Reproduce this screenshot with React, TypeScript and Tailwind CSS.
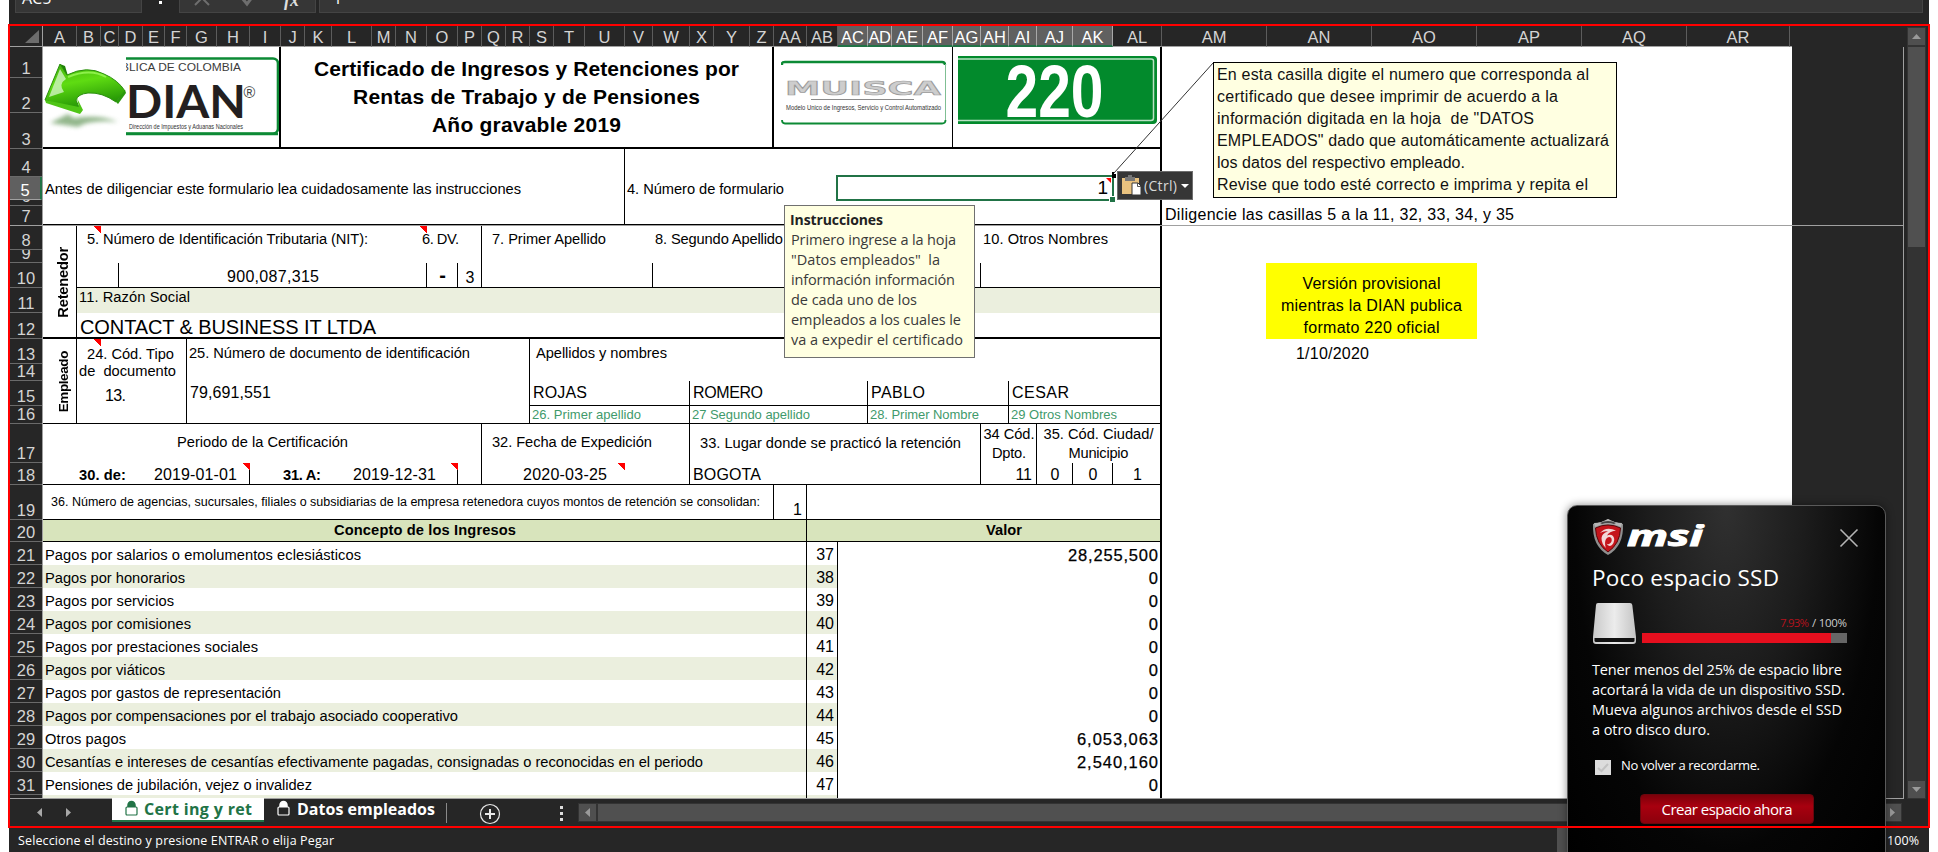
import { ReactNode, useLayoutEffect, useRef } from "react";

const COLUMNS: [string, number][] = [
  ["A", 34], ["B", 24], ["C", 18], ["D", 24], ["E", 22], ["F", 22], ["G", 30], ["H", 33], ["I", 31],
  ["J", 24], ["K", 27], ["L", 40], ["M", 24], ["N", 31], ["O", 31], ["P", 24], ["Q", 24], ["R", 24],
  ["S", 24], ["T", 31], ["U", 40], ["V", 28], ["W", 37], ["X", 24], ["Y", 36], ["Z", 24], ["AA", 33],
  ["AB", 31], ["AC", 30], ["AD", 24], ["AE", 31], ["AF", 30], ["AG", 28], ["AH", 28], ["AI", 28],
  ["AJ", 36], ["AK", 40], ["AL", 49], ["AM", 105], ["AN", 105], ["AO", 105], ["AP", 105], ["AQ", 105],
  ["AR", 103],
];
const TOP_ROWS = [31, 35, 36, 28, 23, 6, 19];
const BODY_ROWS = [24, 13, 25, 25, 26, 25, 17, 25, 18, 39, 22, 35, 22, 23, 23, 23, 23, 23, 23, 23, 23, 23, 23, 23, 3];
const BODY_START = 8;

const px = (sizes: number[]) => sizes.map((s) => s + "px").join(" ");
const COLUMN_TEMPLATE = px(COLUMNS.map((c) => c[1]));
const columnIndex = (name: string) => COLUMNS.findIndex((c) => c[0] === name) + 1;

function gridArea(range: string, firstRow: number) {
  const [from, to = from] = range.split(":");
  const a = /([A-Z]+)(\d+)/.exec(from)!;
  const b = /([A-Z]+)(\d+)/.exec(to)!;
  return `${+a[2] - firstRow + 1} / ${columnIndex(a[1])} / ${+b[2] - firstRow + 2} / ${columnIndex(b[1]) + 1}`;
}

/** Text set to a given width by adjusting the space between its letters. */
function T({ w, className = "", children }: { w?: number; className?: string; children: string }) {
  const ref = useRef<HTMLSpanElement>(null);
  useLayoutEffect(() => {
    const el = ref.current;
    if (!el || !w) return;
    const gaps = Math.max(1, children.length - 1);
    let space = 0;
    for (let pass = 0; pass < 3; pass++) {
      el.style.letterSpacing = space.toFixed(4) + "px";
      const drawn = el.getBoundingClientRect().width - space;
      space += (w + 1 - drawn) / gaps;
    }
    el.style.letterSpacing = space.toFixed(4) + "px";
    el.style.marginRight = (-space).toFixed(4) + "px";
  }, [w, children]);
  return (
    <span ref={ref} className={"inline-block shrink-0 whitespace-pre [font-variant-ligatures:none] " + className}>
      {children}
    </span>
  );
}

function Cell({ at, className = "", children }: { at: string; className?: string; children?: ReactNode }) {
  const row = +/\d+/.exec(at)![0];
  return (
    <div
      className={"flex min-h-0 min-w-0 items-end leading-none " + className}
      style={{ gridArea: gridArea(at, row < BODY_START ? 1 : BODY_START) }}
    >
      {children}
    </div>
  );
}

function Flag({ at }: { at: string }) {
  return (
    <Cell at={at} className="items-start! justify-end">
      <svg className="h-[8px] w-[8px] shrink-0" viewBox="0 0 8 8" shapeRendering="crispEdges">
        <path d="M0 0H8V8Z" fill="#f00" />
      </svg>
    </Cell>
  );
}

function Pane({ rows, children }: { rows: number[]; children: ReactNode }) {
  return (
    <div
      className="grid w-[1749px] shrink-0 bg-white text-[14.67px] text-black"
      style={{ gridTemplateColumns: COLUMN_TEMPLATE, gridTemplateRows: px(rows) }}
    >
      {children}
    </div>
  );
}

function RowHeads({ rows, first }: { rows: number[]; first: number }) {
  return (
    <div className="flex w-[34px] shrink-0 flex-col border-r border-[#a0a0a0] pl-px">
      {rows.map((h, i) => {
        const n = first + i;
        const active = n === 5;
        return (
          <div
            key={n}
            style={{ height: h }}
            className={
              "flex shrink-0 items-end justify-center overflow-hidden pb-px text-[16.5px] leading-none " +
              (active
                ? "border-b border-r-2 border-b-[#a0a0a0] border-r-[#217346] bg-[#606060] text-white"
                : "text-[#d4d4d4] " + (n === 7 || n === 32 ? "" : "border-b border-[#6a6a6a]"))
            }
          >
            {n === 32 ? "" : n}
          </div>
        );
      })}
    </div>
  );
}

const CONCEPTS: [string, number, string, number][] = [
  ["Pagos por salarios o emolumentos eclesiásticos", 315, "28,255,500", 89],
  ["Pagos por honorarios", 139, "0", 0],
  ["Pagos por servicios", 128, "0", 0],
  ["Pagos por comisiones", 145, "0", 0],
  ["Pagos por prestaciones sociales", 212, "0", 0],
  ["Pagos por viáticos", 119, "0", 0],
  ["Pagos por gastos de representación", 235, "0", 0],
  ["Pagos por compensaciones por el trabajo asociado cooperativo", 412, "0", 0],
  ["Otros pagos", 80, "6,053,063", 80],
  ["Cesantías e intereses de cesantías efectivamente pagadas, consignadas o reconocidas en el periodo", 657, "2,540,160", 80],
  ["Pensiones de jubilación, vejez o invalidez", 266, "0", 0],
];

function DianLogo() {
  return (
    <svg className="h-[98px] w-[236px]" viewBox="43 47 236 98">
      <defs>
        <linearGradient id="leaf" x1="0" y1="0" x2="0.3" y2="1">
          <stop offset="0" stopColor="#3fae0c" />
          <stop offset="0.45" stopColor="#5fdc12" />
          <stop offset="1" stopColor="#1f8f04" />
        </linearGradient>
        <filter id="soft" x="-30%" y="-80%" width="160%" height="260%">
          <feGaussianBlur stdDeviation="2.2" />
        </filter>
        <clipPath id="brand"><rect x="126" y="47" width="160" height="98" /></clipPath>
      </defs>
      <path d="M50 123 L68 114 L74 118 Q100 114 118 122 Q98 120 84 124 L78 127Z" fill="#6f9f66" opacity=".75" filter="url(#soft)" />
      <path d="M60 64 L65 66 L68 76 L63 77Z" fill="#1e8205" />
      <path d="M45 100 L60 64 L67 75 Q87 65 104 74 Q118 80 125 91 L116 102 Q102 92 88 93 Q78 94 76 100 L81 112Z" fill="url(#leaf)" stroke="#2c8f10" strokeWidth="1" />
      <path d="M49 97 L60 69 L66 79 Q58 84 64 92Z" fill="#d9f6cf" opacity=".75" />
      <path d="M68 77 Q90 68 106 77" stroke="#8df04a" strokeWidth="2" fill="none" />
      <path d="M45 100 L46 103 L80 114 L83 110 L77 98 L79 107Z" fill="#4fc516" />
      <path d="M116 102 L118 104 L126 93 L125 90Z" fill="#2a9a0c" />
      <g clipPath="url(#brand)">
        <rect x="100" y="58.5" width="178" height="75" rx="5" fill="none" stroke="#0c8a35" strokeWidth="2.6" />
        <path d="M126 134H278" stroke="#0c8a35" strokeWidth="2.4" />
        <text x="121" y="71" textLength="120" lengthAdjust="spacingAndGlyphs" fontSize="10.5" fill="#3c3c3c" fontFamily="Liberation Sans, sans-serif">BLICA DE COLOMBIA</text>
        <text x="126" y="118" textLength="120" lengthAdjust="spacingAndGlyphs" fontSize="45" fontWeight="700" fill="#231f20" fontFamily="Lato, sans-serif">DIAN</text>
        <text x="243.500" y="98" fontSize="16" fill="#444" fontFamily="Liberation Sans, sans-serif">®</text>
        <text x="129" y="129" textLength="114" lengthAdjust="spacingAndGlyphs" fontSize="7" fill="#333" fontFamily="Liberation Sans, sans-serif">Dirección de Impuestos y Aduanas Nacionales</text>
      </g>
    </svg>
  );
}

function MuiscaLogo() {
  return (
    <svg className="h-[66px] w-[166px]" viewBox="0 0 166 66">
      <path d="M1 5 V3.500 Q1 2 4 2 H161 Q164 2 164 5" fill="none" stroke="#0c8a35" strokeWidth="2.4" />
      <path d="M164.500 4V62" stroke="#7fbf93" strokeWidth="1" />
      <path d="M1 60 Q1 63.500 4 63.500 H161 Q164.500 63.500 164.500 60" fill="none" stroke="#0c8a35" strokeWidth="1.800" />
      <text x="4" y="34.500" textLength="156" lengthAdjust="spacingAndGlyphs" fontSize="20" fontWeight="700" fill="#cdcdcd" stroke="#9c9c9c" strokeWidth=".7" fontFamily="DejaVu Sans, sans-serif">MUISCA</text>
      <path d="M30 39.500H133" stroke="#8a8a8a" strokeWidth="1" />
      <text x="5" y="50" textLength="155" lengthAdjust="spacingAndGlyphs" fontSize="7.500" fill="#333" fontFamily="Liberation Sans, sans-serif">Modelo Unico de Ingresos, Servicio y Control Automatizado</text>
    </svg>
  );
}

function Badge220() {
  return (
    <svg className="h-[68px] w-[199px]" viewBox="0 0 199 68">
      <path d="M0 0H195Q199 0 199 4V64Q199 68 195 68H0Z" fill="#028a2c" />
      <path d="M0 3H193Q195.500 3 195.500 5V62Q195.500 64.500 193 64.500H0" fill="none" stroke="#b9e2c3" strokeWidth="1.500" />
      <text x="47.500" y="60.500" textLength="98" lengthAdjust="spacingAndGlyphs" fontSize="74" fontWeight="700" fill="#fff" fontFamily="Liberation Sans Narrow, Liberation Sans, sans-serif">220</text>
    </svg>
  );
}

function FormulaBar() {
  return (
    <div className="flex h-[26px] shrink-0 items-start gap-[3px] pl-[6px]">
      <div className="flex h-[13px] w-[127px] items-end overflow-hidden border border-t-0 border-[#444] bg-[#363636] pb-[6px] pl-[6px] text-[16px] leading-none text-white [font-family:'Open_Sans',sans-serif]">
        AC5
      </div>
      <div className="flex h-[5px] w-[31px] items-start justify-center pt-px">
        <i className="h-[3px] w-[3px] bg-white" />
      </div>
      <div className="flex h-[13px] w-[137px] justify-between overflow-hidden border border-t-0 border-[#444] bg-[#363636] pl-[14px] pr-[16px]">
        <svg className="h-[12px] w-[17px]" viewBox="0 0 17 12"><path d="M1 5L8 -2L15 5" stroke="#6e6e6e" strokeWidth="2" fill="none" /></svg>
        <svg className="h-[12px] w-[14px]" viewBox="0 0 14 12"><path d="M1 -2L6 4L12 -4" stroke="#6e6e6e" strokeWidth="3" fill="none" /></svg>
        <div className="flex h-[12px] items-end pb-[3px] text-[18px] font-bold italic leading-none text-[#ddd] [font-family:'Liberation_Serif',serif]">fx</div>
      </div>
      <div className="flex h-[13px] w-[1604px] items-end overflow-hidden border border-t-0 border-[#444] bg-[#363636] pb-[6px] pl-[13px] text-[16px] leading-none text-white [font-family:'Open_Sans',sans-serif]">
        1
      </div>
    </div>
  );
}

function ColumnHeads() {
  return (
    <div className="flex h-[21px] shrink-0">
      <div className="flex w-[34px] shrink-0 items-end justify-end border-b border-r border-[#a0a0a0] pb-[3px] pr-[3px]">
        <svg className="h-[13px] w-[14px]" viewBox="0 0 14 13"><path d="M14 0V13H0Z" fill="#6d6d6d" /></svg>
      </div>
      {COLUMNS.map(([name, w], i) => {
        const active = i >= 28 && i <= 36;
        return (
          <div
            key={name}
            style={{ width: w }}
            className={
              "flex shrink-0 items-end justify-center whitespace-nowrap border-r text-[16.5px] leading-none " +
              (active
                ? "border-b-2 border-b-[#217346] border-r-[#a8a8a8] bg-[#606060] pb-0 text-white"
                : "border-b border-b-[#a0a0a0] border-r-[#5c5c5c] pb-px text-[#d4d4d4]")
            }
          >
            <span className={name === "AD" ? "tracking-[-0.4px]" : ""}>{name}</span>
          </div>
        );
      })}
      <div className="w-[2px] border-b border-[#a0a0a0]" />
    </div>
  );
}

function TopPane() {
  return (
    <div className="flex shrink-0 border-b border-[#a0a0a0]">
      <RowHeads rows={TOP_ROWS} first={1} />
      <Pane rows={TOP_ROWS}>
        <Cell at="A1:I3" className="items-start! border-r-2 border-black"><DianLogo /></Cell>
        <Cell at="J1:Z3" className="flex-col items-center! justify-start border-r-2 border-black pt-[8px] text-[21px] font-bold leading-[28px]!">
          <T w={424}>Certificado de Ingresos y Retenciones por</T>
          <T w={346}>Rentas de Trabajo y de Pensiones</T>
          <T w={188}>Año gravable 2019</T>
        </Cell>
        <Cell at="AA1:AF3" className="items-start! border-r border-black pl-[7px] pt-[13px]"><MuiscaLogo /></Cell>
        <Cell at="AG1:AL3" className="items-start! pl-[5px] pt-[9px]"><Badge220 /></Cell>
        <Cell at="A1:AL3" className="border-b-2 border-black" />
        <Cell at="A1:AL7" className="border-r-2 border-b border-black" />
        <Cell at="A4:U7" className="border-r border-black" />
        <Cell at="A5:U5" className="pb-[3px] pl-[2px]"><T w={475}>Antes de diligenciar este formulario lea cuidadosamente las instrucciones</T></Cell>
        <Cell at="V5:AB5" className="pb-[3px] pl-[2px]"><T w={156}>4. Número de formulario</T></Cell>
        <Cell at="AC5:AK5" className="justify-end pb-[3px] pr-[5px] text-[19px]"><T>1</T></Cell>
        <Cell at="AM7:AR7" className="pb-[2px] pl-[3px] text-[16px]"><T w={348}>Diligencie las casillas 5 a la 11, 32, 33, 34, y 35</T></Cell>
      </Pane>
    </div>
  );
}

function BodyPane() {
  return (
    <div className="flex shrink-0 border-b border-[#a0a0a0]">
      <RowHeads rows={BODY_ROWS} first={BODY_START} />
      <Pane rows={BODY_ROWS}>
        <Cell at="B11:AL11" className="bg-[#ebefde]" />
        <Cell at="A20:AL20" className="bg-[#d8e4bc]" />
        {[22, 24, 26, 28, 30, 32].map((r) => (
          <Cell key={r} at={`A${r}:AB${r}`} className="bg-[#ebefde]" />
        ))}

        <Cell at="A8:AL32" className="border-r-2 border-black" />
        <Cell at="A8:AL12" className="border-b-2 border-black" />
        <Cell at="A8:A16" className="border-r border-black" />
        <Cell at="B8:P10" className="border-r border-black" />
        <Cell at="B10:AL10" className="border-b border-black" />
        <Cell at="B10:C10" className="border-r border-black" />
        <Cell at="D10:N10" className="border-r border-black" />
        <Cell at="O10" className="border-r border-black" />
        <Cell at="Q10:V10" className="border-r border-black" />
        <Cell at="W10:AG10" className="border-r border-black" />
        <Cell at="A13:AL16" className="border-b border-black" />
        <Cell at="B13:F16" className="border-r border-black" />
        <Cell at="G13:R16" className="border-r border-black" />
        <Cell at="S15:AL15" className="border-b border-black" />
        <Cell at="S15:W16" className="border-r border-black" />
        <Cell at="X15:AC16" className="border-r border-black" />
        <Cell at="AD15:AH16" className="border-r border-black" />
        <Cell at="A17:AL18" className="border-b border-black" />
        <Cell at="A17:P18" className="border-r border-black" />
        <Cell at="Q17:W18" className="border-r border-black" />
        <Cell at="X17:AG18" className="border-r border-black" />
        <Cell at="AH17:AI18" className="border-r border-black" />
        <Cell at="A18:H18" className="border-r border-black" />
        <Cell at="I18:O18" className="border-r border-black" />
        <Cell at="AJ18" className="border-r border-black" />
        <Cell at="AK18" className="border-r border-black" />
        <Cell at="A19:AL19" className="border-b border-black" />
        <Cell at="A19:Z19" className="border-r border-black" />
        <Cell at="A20:AL20" className="border-b border-black" />
        <Cell at="A19:AA32" className="border-r border-black" />
        <Cell at="AB21:AB32" className="border-r border-black" />

        <Flag at="B8" />
        <Flag at="N8" />
        <Flag at="B13" />
        <Flag at="H18" />
        <Flag at="O18" />
        <Flag at="U18" />

        <Cell at="A8:A12" className="items-center! justify-center pl-[7px]">
          <span className="rotate-180 text-[14.67px] font-bold tracking-[-0.2px] [writing-mode:vertical-rl]">Retenedor</span>
        </Cell>
        <Cell at="A13:A16" className="items-center! justify-center pl-[7px]">
          <span className="rotate-180 text-[13.5px] font-bold tracking-[-0.4px] [writing-mode:vertical-rl]">Empleado</span>
        </Cell>

        <Cell at="B8:L8" className="pb-[3px] pl-[10px]"><T w={280}>5. Número de Identificación Tributaria (NIT):</T></Cell>
        <Cell at="M8:P8" className="pb-[3px] pl-[50px]"><T w={36}>6. DV.</T></Cell>
        <Cell at="Q8:V8" className="pb-[3px] pl-[10px]"><T w={113}>7. Primer Apellido</T></Cell>
        <Cell at="W8:Z8" className="pb-[3px] pl-[2px]"><T w={127}>8. Segundo Apellido</T></Cell>
        <Cell at="AH8:AL8" className="pb-[3px] pl-[2px]"><T w={124}>10. Otros Nombres</T></Cell>

        <Cell at="D10:N10" className="justify-center pb-[3px] text-[16px]"><T w={91}>900,087,315</T></Cell>
        <Cell at="O10" className="justify-center pb-[3px] text-[20px] font-bold"><T>-</T></Cell>
        <Cell at="P10" className="justify-center pb-[2px] text-[16px]"><T>3</T></Cell>
        <Cell at="B11:AL11" className="pb-[8px] pl-[2px]"><T w={110}>11. Razón Social</T></Cell>
        <Cell at="B12:AL12" className="pb-[2px] pl-[3px] text-[20px]"><T w={295}>CONTACT & BUSINESS IT LTDA</T></Cell>

        <Cell at="B13:F14" className="flex-col items-start! justify-end pb-px pl-[2px] leading-[17px]!">
          <T w={86} className="ml-[8px]">24. Cód. Tipo</T>
          <T w={96}>de  documento</T>
        </Cell>
        <Cell at="B15:F15" className="pb-[2px] pl-[28px] text-[16px]"><T w={20}>13.</T></Cell>
        <Cell at="G13:R13" className="pb-[3px] pl-[2px]"><T w={280}>25. Número de documento de identificación</T></Cell>
        <Cell at="G15:R15" className="pb-[5px] pl-[3px] text-[16px]"><T w={80}>79,691,551</T></Cell>
        <Cell at="S13:AL13" className="pb-[3px] pl-[6px]"><T w={130}>Apellidos y nombres</T></Cell>
        <Cell at="S15:W15" className="pb-[5px] pl-[3px] text-[16px]"><T w={53}>ROJAS</T></Cell>
        <Cell at="X15:AC15" className="pb-[5px] pl-[3px] text-[16px]"><T w={69}>ROMERO</T></Cell>
        <Cell at="AD15:AH15" className="pb-[5px] pl-[3px] text-[16px]"><T w={53}>PABLO</T></Cell>
        <Cell at="AI15:AL15" className="pb-[5px] pl-[3px] text-[16px]"><T w={56}>CESAR</T></Cell>
        <Cell at="S16:W16" className="pb-[3px] pl-[2px] text-[13px] text-[#3f9a6b]"><T w={108}>26. Primer apellido</T></Cell>
        <Cell at="X16:AC16" className="pb-[3px] pl-[2px] text-[13px] text-[#3f9a6b]"><T w={117}>27 Segundo apellido</T></Cell>
        <Cell at="AD16:AH16" className="pb-[3px] pl-[2px] text-[13px] text-[#3f9a6b]"><T w={108}>28. Primer Nombre</T></Cell>
        <Cell at="AI16:AL16" className="pb-[3px] pl-[2px] text-[13px] text-[#3f9a6b]"><T w={105}>29 Otros Nombres</T></Cell>

        <Cell at="A17:P17" className="justify-center pb-[13px]"><T w={170}>Periodo de la Certificación</T></Cell>
        <Cell at="Q17:W17" className="pb-[13px] pl-[10px]"><T w={159}>32. Fecha de Expedición</T></Cell>
        <Cell at="X17:AG17" className="pb-[12px] pl-[10px]"><T w={260}>33. Lugar donde se practicó la retención</T></Cell>
        <Cell at="AH17:AI17" className="flex-col items-center! justify-end pb-0 leading-[19px]!">
          <T w={50}>34 Cód.</T>
          <T w={33}>Dpto.</T>
        </Cell>
        <Cell at="AJ17:AL17" className="flex-col items-center! justify-end pb-0 pr-[2px] leading-[19px]!">
          <T w={109}>35. Cód. Ciudad/</T>
          <T w={59}>Municipio</T>
        </Cell>

        <Cell at="B18:E18" className="pb-[2px] pl-[2px] font-bold"><T w={46}>30. de:</T></Cell>
        <Cell at="E18:H18" className="pb-[2px] pl-[11px] text-[16px]"><T w={82}>2019-01-01</T></Cell>
        <Cell at="I18:K18" className="pb-[2px] pl-[33px] font-bold"><T w={37}>31. A:</T></Cell>
        <Cell at="L18:O18" className="pb-[2px] pl-[21px] text-[16px]"><T w={82}>2019-12-31</T></Cell>
        <Cell at="R18:U18" className="pb-[2px] pl-[17px] text-[16px]"><T w={83}>2020-03-25</T></Cell>
        <Cell at="X18:AG18" className="pb-[2px] pl-[3px] text-[16px]"><T w={67}>BOGOTA</T></Cell>
        <Cell at="AH18:AI18" className="justify-end pb-[2px] pr-[5px] text-[16px]"><T>11</T></Cell>
        <Cell at="AJ18" className="justify-center pb-[2px] text-[16px]"><T>0</T></Cell>
        <Cell at="AK18" className="justify-center pb-[2px] text-[16px]"><T>0</T></Cell>
        <Cell at="AL18" className="justify-center pb-[2px] text-[16px]"><T>1</T></Cell>

        <Cell at="A19:Z19" className="pb-[12px] pl-[8px] text-[12.500px]"><T w={708}>36. Número de agencias, sucursales, filiales o subsidiarias de la empresa retenedora cuyos montos de retención se consolidan:</T></Cell>
        <Cell at="AA19" className="justify-end pb-[2px] pr-[5px] text-[16px]"><T>1</T></Cell>
        <Cell at="A20:AA20" className="justify-center pb-[4px] font-bold"><T w={181}>Concepto de los Ingresos</T></Cell>
        <Cell at="AB20:AL20" className="justify-center pb-[4px] pl-[39px] font-bold"><T w={35}>Valor</T></Cell>

        {CONCEPTS.map(([label, w], i) => (
          <Cell key={label} at={`A${21 + i}:AA${21 + i}`} className="pb-[2px] pl-[2px]"><T w={w}>{label}</T></Cell>
        ))}
        {CONCEPTS.map(([label], i) => (
          <Cell key={label} at={`AB${21 + i}`} className="justify-end pb-[2px] pr-[4px] text-[16px]"><T>{String(37 + i)}</T></Cell>
        ))}
        {CONCEPTS.map(([label, , value, vw], i) => (
          <Cell key={label} at={`AC${21 + i}:AL${21 + i}`} className="justify-end pb-[2px] pr-[4px] text-[16.5px] [-webkit-text-stroke:0.25px_black]"><T w={vw}>{value}</T></Cell>
        ))}

        <Cell at="AN10:AO12" className="-ml-px flex-col items-center! justify-start bg-[#ff0] pt-[10px] text-[16px] leading-[22px]!">
          <T w={137}>Versión provisional</T>
          <T w={180}>mientras la DIAN publica</T>
          <T w={135}>formato 220 oficial</T>
        </Cell>
        <Cell at="AN13" className="justify-end pb-[2px] pr-[3px] text-[16px]"><T w={72}>1/10/2020</T></Cell>
      </Pane>
    </div>
  );
}

function VerticalScroll() {
  return (
    <div className="flex w-[25px] shrink-0 justify-start pl-[3px] pt-px">
      <div className="flex h-[772px] w-[19px] flex-col items-center bg-[#333] py-px">
        <div className="flex h-[17px] w-[17px] items-center justify-center bg-[#4f4f4f]">
          <svg className="h-[5px] w-[9px]" viewBox="0 0 9 5"><path d="M0 5L4.500 0L9 5Z" fill="#9a9a9a" /></svg>
        </div>
        <div className="mt-[2px] h-[200px] w-[17px] bg-[#505050]" />
        <div className="mt-auto flex h-[17px] w-[17px] items-center justify-center bg-[#4f4f4f]">
          <svg className="h-[5px] w-[9px]" viewBox="0 0 9 5"><path d="M0 0L4.500 5L9 0Z" fill="#9a9a9a" /></svg>
        </div>
      </div>
    </div>
  );
}

function Lock({ body, ring }: { body: string; ring: string }) {
  return (
    <svg className="h-[16px] w-[13px]" viewBox="0 0 13 16">
      <path d="M3 7V5a3.500 3.500 0 0 1 7 0V7" fill={ring} stroke={ring} strokeWidth="1.500" />
      <rect x="1" y="7" width="11" height="8" rx="1" fill={body} stroke={ring} strokeWidth="1.200" />
    </svg>
  );
}

function SheetTabs() {
  return (
    <div className="flex h-[29px] shrink-0 items-start text-[16px] font-bold [font-family:'Open_Sans',sans-serif]">
      <div className="flex w-[103px] items-center gap-[24px] pl-[28px] pt-[9px]">
        <svg className="h-[9px] w-[5px]" viewBox="0 0 5 9"><path d="M5 0V9L0 4.500Z" fill="#a8a8a8" /></svg>
        <svg className="h-[9px] w-[5px]" viewBox="0 0 5 9"><path d="M0 0V9L5 4.500Z" fill="#a8a8a8" /></svg>
      </div>
      <div className="-mt-px flex h-[24px] w-[152px] items-start gap-[6px] border-b-2 border-[#217346] bg-white pl-[13px] pt-[2px] leading-none text-[#217346]">
        <Lock body="#fff" ring="#217346" />
        <T w={107} className="mt-px">Cert ing y ret</T>
      </div>
      <div className="flex h-[25px] w-[182px] items-start gap-[7px] pl-[13px] pt-px leading-none text-white">
        <Lock body="#262626" ring="#fff" />
        <T w={137} className="mt-px">Datos empleados</T>
      </div>
      <div className="mt-[4px] h-[20px] w-px bg-[#8a8a8a]" />
      <svg className="ml-[32px] mt-[4px] h-[22px] w-[22px]" viewBox="0 0 22 22">
        <circle cx="11" cy="11" r="9.500" fill="none" stroke="#e8e8e8" strokeWidth="1.200" />
        <path d="M11 6V16M6 11H16" stroke="#e8e8e8" strokeWidth="2" />
      </svg>
      <div className="ml-[59px] mt-[7px] flex flex-col gap-[3px]">
        <i className="h-[3px] w-[3px] bg-[#ddd]" />
        <i className="h-[3px] w-[3px] bg-[#ddd]" />
        <i className="h-[3px] w-[3px] bg-[#ddd]" />
      </div>
      <div className="ml-[15px] mt-[4px] flex h-[19px] w-[1324px] bg-[#333] p-px">
        <div className="flex w-[17px] items-center justify-center bg-[#4f4f4f]">
          <svg className="h-[9px] w-[5px]" viewBox="0 0 5 9"><path d="M5 0V9L0 4.500Z" fill="#9a9a9a" /></svg>
        </div>
        <div className="ml-[2px] w-[1050px] bg-[#505050]" />
        <div className="ml-auto flex w-[17px] items-center justify-center bg-[#4f4f4f]">
          <svg className="h-[9px] w-[5px]" viewBox="0 0 5 9"><path d="M0 0V9L5 4.500Z" fill="#9a9a9a" /></svg>
        </div>
      </div>
    </div>
  );
}

function SelectionAndNotes() {
  return (
    <>
      <div className="absolute left-[836px] top-[175px] h-[26px] w-[278px] border-2 border-[#217346]" />
      <div className="absolute left-[1109px] top-[196px] h-[6px] w-[6px] border-l border-t border-white bg-[#217346]" />
      <svg className="absolute left-[1103px] top-[61px] h-[122px] w-[112px]" viewBox="0 0 112 122">
        <path d="M110.500 1.500L11 112" stroke="#333" strokeWidth="1" />
        <path d="M9 111h2v2h2v4h-4z" fill="#000" />
        <path d="M3 117H8V122Z" fill="#f00" />
      </svg>
      <div className="absolute left-[1213px] top-[62px] flex h-[136px] w-[404px] flex-col items-start overflow-hidden border border-black bg-[#ffffe1] pl-[3px] pt-px text-[16px] leading-[22px] text-[#111]">
        <T w={371}>En esta casilla digite el numero que corresponda al</T>
        <T w={340}>certificado que desee imprimir de acuerdo a la</T>
        <T w={316}>información digitada en la hoja  de "DATOS</T>
        <T w={391}>EMPLEADOS" dado que automáticamente actualizará</T>
        <T w={247}>los datos del respectivo empleado.</T>
        <T w={370}>Revise que todo esté correcto e imprima y repita el</T>
      </div>
      <div className="absolute left-[1117px] top-[171px] flex h-[29px] w-[76px] items-center border border-[#6e6e6e] bg-[#363636] pl-[4px] text-[14px] leading-none text-[#d8d8d8] [font-family:'Open_Sans',sans-serif]">
        <svg className="h-[21px] w-[20px] shrink-0" viewBox="0 0 20 21">
          <rect x="0" y="3" width="17" height="16" fill="#e9c27f" />
          <path d="M3 2H6V0H10V2H13V6H3Z" fill="#777" />
          <path d="M10 8H16L19 11V20H10Z" fill="#fff" stroke="#363636" strokeWidth="1" />
          <path d="M15.500 8V11.500H19" fill="none" stroke="#555" strokeWidth="1" />
        </svg>
        <T w={32} className="ml-[2px]">(Ctrl)</T>
        <svg className="ml-[4px] h-[4px] w-[8px] shrink-0" viewBox="0 0 8 4"><path d="M0 0H8L4 4Z" fill="#fff" /></svg>
      </div>
      <div className="absolute left-[784px] top-[205px] flex h-[153px] w-[191px] flex-col items-start border border-[#707070] bg-[#ffffe1] pl-[7px] pt-[3px] text-[14.5px] leading-[20px] text-[#3a3a3a] [font-family:'Open_Sans',sans-serif]">
        <T w={92} className="-ml-[2px] text-[14px] font-bold leading-[21px] text-[#222]">Instrucciones</T>
        <T w={164} className="-ml-px">Primero ingrese a la hoja</T>
        <T w={148} className="-ml-px">"Datos empleados"  la</T>
        <T w={163} className="-ml-px">información información</T>
        <T w={125} className="-ml-px">de cada uno de los</T>
        <T w={169} className="-ml-px">empleados a los cuales le</T>
        <T w={171} className="-ml-px">va a expedir el certificado</T>
      </div>
    </>
  );
}

function SsdPopup() {
  return (
    <div className="absolute left-[1567px] top-[505px] h-[360px] w-[319px] rounded-[10px] border border-[#5a5a5a] bg-[radial-gradient(ellipse_at_50%_0%,#303030_0%,#1c1c1c_35%,#050505_68%,#000_100%)] pl-[24px] text-white shadow-[0_0_8px_rgba(0,0,0,0.45)] [font-family:'Open_Sans',sans-serif]">
      <div className="flex h-[52px] items-start">
        <svg className="mt-[12px] h-[38px] w-[32px]" viewBox="0 0 32 38">
          <path d="M1 6Q9 5 16 1Q23 5 31 6Q32 28 16 37Q0 28 1 6Z" fill="#8f8f8f" />
          <path d="M2 5Q10 5 16 1Q22 5 30 5L29 9Q16 2 3 9Z" fill="#b5b5b5" />
          <path d="M8 5Q16 1 24 5L22 6Q16 4 10 6Z" fill="#444" />
          <path d="M3.500 10Q16 4 28.500 10Q28 26 16 34Q4 26 3.500 10Z" fill="#c5141b" stroke="#5b0508" strokeWidth="1" />
          <path d="M24 12.500Q14 8 8 15Q12 12.500 16 13.500Q10 15 9.500 20Q9.500 26 14 30Q12 25 14 21Q17 17.500 19.500 20.500Q20.500 24 17 26Q15.500 26.500 14.500 25.500Q16.500 29.500 20 27Q24 22 21 18Q18.500 16 15 17.500Q17 13.500 24 12.500Z" fill="#f2d7d7" />
        </svg>
        <svg className="ml-[3px] mt-[18px] h-[26px] w-[80px]" viewBox="0 0 80 26">
          <text x="0" y="22" textLength="76" lengthAdjust="spacingAndGlyphs" fontSize="29" fontWeight="700" fontStyle="italic" fill="#fff" stroke="#fff" strokeWidth="1" fontFamily="Open Sans, sans-serif">msi</text>
        </svg>
        <svg className="ml-auto mr-[26px] mt-[22px] h-[20px] w-[20px]" viewBox="0 0 20 20">
          <path d="M1.500 1.500L18.500 18.500M18.500 1.500L1.500 18.500" stroke="#b5b5b5" strokeWidth="1.600" />
        </svg>
      </div>
      <div className="mt-[5px] flex text-[22.500px] leading-[30px]"><T w={186}>Poco espacio SSD</T></div>
      <div className="mt-[9px] flex h-[42px] pl-px">
        <svg className="h-[42px] w-[43px] shrink-0" viewBox="0 0 43 42">
          <defs>
            <linearGradient id="disk" x1="0" y1="0" x2="1" y2="0">
              <stop offset="0" stopColor="#c9c9c9" />
              <stop offset=".5" stopColor="#ececec" />
              <stop offset="1" stopColor="#c4c4c4" />
            </linearGradient>
          </defs>
          <path d="M5 1H37Q39 1 39.300 3L43 35V39Q43 42 40 42H3Q0 42 0 39V35L3 3Q3 1 5 1Z" fill="url(#disk)" />
          <path d="M1.500 36H41.500V38.500Q41.500 40 40 40H3Q1.500 40 1.500 38.500Z" fill="#111" />
        </svg>
        <div className="ml-[6px] flex w-[205px] flex-col">
          <div className="mt-[11px] flex h-[20px] justify-end text-[11.500px] leading-[20px] text-[#ccc]">
            <T w={28} className="text-[#b3121d]">7.93%</T>
            <T w={34} className="ml-[3px]">/ 100%</T>
          </div>
          <div className="h-[10px] w-[205px] bg-[#666]"><div className="h-[10px] w-[189px] bg-[#e60f1e]" /></div>
        </div>
      </div>
      <div className="mt-[16px] flex flex-col items-start text-[14.500px] leading-[20px]">
        <T w={249}>Tener menos del 25% de espacio libre</T>
        <T w={252}>acortará la vida de un dispositivo SSD.</T>
        <T w={249}>Mueva algunos archivos desde el SSD</T>
        <T w={117}>a otro disco duro.</T>
      </div>
      <div className="mt-[15px] flex h-[20px] items-start gap-[10px] pl-[3px] text-[13px] leading-none">
        <div className="mt-[5px] flex h-[15px] w-[16px] items-center justify-center bg-[#dcdcdc]">
          <svg className="h-[10px] w-[12px]" viewBox="0 0 12 10"><path d="M1 5L4.500 8L11 1" stroke="#c2c2c2" strokeWidth="2" fill="none" /></svg>
        </div>
        <T w={138} className="mt-[4px]">No volver a recordarme.</T>
      </div>
      <div className="ml-[48px] mt-[19px] flex h-[30px] w-[174px] items-center justify-center rounded-[4px] border border-[#6a060d] bg-[linear-gradient(#7c000a,#a8000f_40%,#8c000c)] pt-px text-[15px]">
        <T w={130}>Crear espacio ahora</T>
      </div>
    </div>
  );
}

export default function App() {
  return (
    <div className="relative h-[852px] w-[1938px] overflow-hidden bg-white pl-[9px] [font-family:'Liberation_Sans',Arial,sans-serif]">
      <div className="flex h-[852px] w-[1920px] flex-col bg-[#262626]">
        <FormulaBar />
        <div className="flex h-[773px] shrink-0">
          <div className="flex w-[1895px] shrink-0 flex-col">
            <ColumnHeads />
            <div className="flex flex-col border-r border-[#a0a0a0]">
              <TopPane />
              <BodyPane />
            </div>
          </div>
          <VerticalScroll />
        </div>
        <SheetTabs />
        <div className="flex h-[24px] items-center justify-between pl-[9px] pr-[10px] text-[12.500px] text-white [font-family:'Open_Sans',sans-serif]">
          <T w={315} className="pt-[3px]">Seleccione el destino y presione ENTRAR o elija Pegar</T>
          <div className="flex h-[24px] items-center">
            <div className="mr-[310px] h-[24px] w-[20px] bg-[#505050]" />
            <T w={31} className="pt-[3px]">100%</T>
          </div>
        </div>
      </div>
      <SelectionAndNotes />
      <SsdPopup />
      <div className="pointer-events-none absolute left-[8px] top-[24px] h-[804px] w-[1922px] border-2 border-[#f00]" />
    </div>
  );
}
